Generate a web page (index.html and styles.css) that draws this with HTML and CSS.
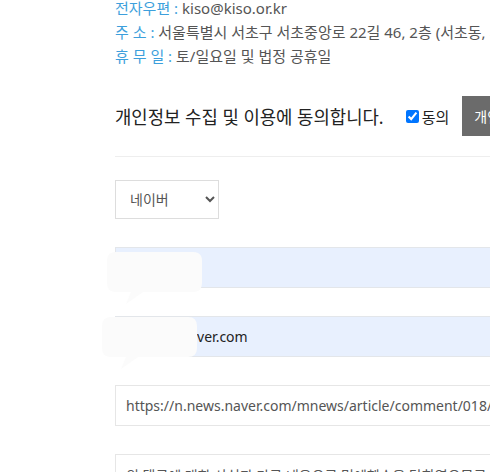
FILE: index.html
```html
<!DOCTYPE html>
<html lang="ko">
<head>
    <meta charset="UTF-8">
    <meta name="viewport" content="width=device-width, initial-scale=1.0">
    <title>게시중단 요청</title>
    <link rel="stylesheet" href="styles.css">
</head>
<body>

    <div class="page">
        <ul class="info-list">
            <li><span class="info-label">전자우편 :</span> kiso@kiso.or.kr</li>
            <li><span class="info-label">주 소 :</span> 서울특별시 서초구 서초중앙로 22길 46, 2층 (서초동, 서초빌딩)</li>
            <li><span class="info-label">휴 무 일 :</span> 토/일요일 및 법정 공휴일</li>
        </ul>

        <div class="agree-row">
            <p class="agree-text">개인정보 수집 및 이용에 동의합니다.</p>
            <label class="agree-check"><input type="checkbox" checked> 동의</label>
            <button class="view-button">개인정보 처리방침 보기</button>
        </div>

        <hr class="divider">

        <select class="portal-select">
            <option>네이버</option>
            <option>다음</option>
        </select>

        <div class="field">
            <input type="text" class="input-field autofill" value="홍길동">
            <svg class="bubble bubble-1" width="100" height="56" viewBox="0 0 100 56">
                <path d="M9 1 H86 Q95 1 95 10 V32 Q95 41 86 41 H36 L19 53 L24 41 H9 Q0 41 0 32 V10 Q0 1 9 1 Z" fill="#fbfbfb"/>
            </svg>
        </div>

        <div class="field">
            <input type="text" class="input-field autofill" value="testeri@naver.com">
            <svg class="bubble bubble-2" width="100" height="56" viewBox="0 0 100 56">
                <path d="M9 1 H86 Q95 1 95 10 V32 Q95 41 86 41 H36 L19 53 L24 41 H9 Q0 41 0 32 V10 Q0 1 9 1 Z" fill="#fbfbfb"/>
            </svg>
        </div>

        <div class="field">
            <input type="text" class="input-field" value="https://n.news.naver.com/mnews/article/comment/018/0005421337?sid=102">
        </div>

        <div class="field">
            <textarea class="input-field memo">위 댓글에 대한 사실과 다른 내용으로 명예훼손을 당하였으므로 삭제를 요청합니다.</textarea>
        </div>
    </div>

</body>
</html>
```

FILE: styles.css
```css
body {
    margin: 0;
    overflow: hidden;
    font-family: "Noto Sans", "Noto Sans CJK KR", sans-serif;
    color: #555;
    background: #fff;
}
.page {
    width: 640px;
    padding-left: 115px;
}
.info-list {
    list-style: none;
    margin: -4px 0 0;
    padding: 0;
    font-size: 15px;
    line-height: 24px;
    white-space: nowrap;
}
.info-label {
    color: #3d9fdc;
}
.agree-row {
    display: flex;
    align-items: center;
    margin-top: 28px;
    height: 40px;
}
.agree-text {
    margin: 0;
    font-size: 17.8px;
    color: #222;
}
.agree-check {
    display: flex;
    align-items: center;
    margin-left: 22px;
    font-size: 15px;
    color: #222;
}
.agree-check input {
    width: 13px;
    height: 13px;
    margin: 0 3px 0 0;
}
.view-button {
    margin-left: 13px;
    height: 40px;
    padding: 0 12px;
    border: none;
    background-color: #6b6b6b;
    color: #fff;
    font-family: inherit;
    font-size: 14px;
    white-space: nowrap;
}
.divider {
    margin: 20px 0 0;
    border: none;
    border-top: 1px solid #eee;
}
.portal-select {
    display: block;
    margin-top: 23px;
    width: 104px;
    height: 39px;
    padding: 0 10px;
    border: 1px solid #ddd;
    border-radius: 0;
    background: #fff;
    color: #555;
    font-family: inherit;
    font-size: 14px;
}
.field {
    position: relative;
    margin-top: 28px;
}
.input-field {
    display: block;
    box-sizing: border-box;
    width: 100%;
    height: 41px;
    padding: 0 10px;
    border: 1px solid #e6e6e6;
    background: #fff;
    color: #555;
    font-family: inherit;
    font-size: 14px;
    outline: none;
}
.input-field.autofill {
    background-color: #e8f0fe;
    border-color: #e3e6ea;
    color: #222;
}
.memo {
    height: 60px;
    padding: 10px 10px;
    resize: none;
}
.bubble {
    position: absolute;
    z-index: 1;
}
.bubble-1 {
    left: -8px;
    top: 4px;
}
.bubble-2 {
    left: -13px;
    top: 0;
}
```
